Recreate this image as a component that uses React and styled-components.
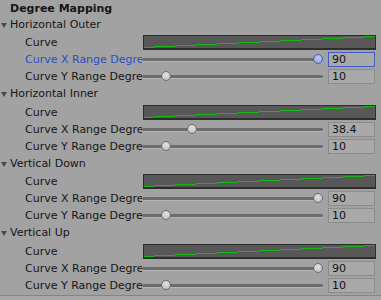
import styled, { createGlobalStyle } from "styled-components";

const GlobalStyle = createGlobalStyle`
  body {
    margin: 0;
    background: #a2a2a2;
    font-family: "DejaVu Sans", "Liberation Sans", sans-serif;
    font-size: 11px;
    color: #161616;
  }
`;

const Panel = styled.div`
  width: 381px;
  height: 300px;
  overflow: hidden;
  background: #a2a2a2;
`;

const Title = styled.div`
  height: 17px;
  padding-left: 10px;
  box-sizing: border-box;
  padding-top: 1px;
  line-height: 16px;
  font-weight: bold;
`;

const Foldout = styled.div`
  display: flex;
  align-items: flex-start;
  height: ${(p) => p.$height}px;
  line-height: 16px;
`;

const Arrow = styled.span`
  width: 0;
  height: 0;
  margin: 6px 3px 0 1px;
  border-left: 3px solid transparent;
  border-right: 3px solid transparent;
  border-top: 5px solid #4a4a4a;
`;

const Row = styled.div`
  display: flex;
  align-items: flex-start;
  height: 17px;
`;

const Label = styled.span`
  width: 117px;
  margin-left: 25px;
  line-height: 15px;
  white-space: nowrap;
  overflow: hidden;
  color: ${(p) => (p.$focused ? "#2b4cc9" : "#161616")};
`;

const CurveBox = styled.div`
  width: 233px;
  height: 15px;
  margin-left: 1px;
  box-sizing: border-box;
  background: #585858;
  border: 1px solid #2e2e2e;
  border-bottom-width: 2px;
  svg {
    display: block;
  }
`;

const SliderArea = styled.div`
  position: relative;
  width: 181px;
  height: 15px;
`;

const Track = styled.div`
  position: absolute;
  left: 0;
  right: 0;
  top: 6px;
  height: 3px;
  border-radius: 2px;
  background: #6c6c6c;
  box-shadow: 0 1px 0 #b4b4b4;
`;

const Thumb = styled.div`
  position: absolute;
  top: 2px;
  width: 10px;
  height: 10px;
  margin-left: -5px;
  box-sizing: border-box;
  border-radius: 50%;
  border: 1px solid ${(p) => (p.$focused ? "#4660bd" : "#6e6e6e")};
  background: ${(p) =>
    p.$focused
      ? "radial-gradient(circle at 50% 35%, #c4cbe6, #8d9bd0)"
      : "radial-gradient(circle at 50% 35%, #e4e4e4, #b6b6b6)"};
`;

const NumberField = styled.div`
  width: 47px;
  height: 15px;
  margin-left: 5px;
  box-sizing: border-box;
  padding-left: 3px;
  line-height: 13px;
  background: #a9a9a9;
  border: 1px solid ${(p) => (p.$focused ? "#3f5fc6" : "#8b8b8b")};
  color: #111;
`;

const Footer = styled.div`
  height: 5px;
  border-top: 1px solid #858585;
  background: #a6a6a6;
`;

function Curve() {
  return (
    <CurveRow>
      <Label>Curve</Label>
      <CurveBox>
        <svg width="231" height="12" shapeRendering="crispEdges">
          <line x1="0" y1="11.5" x2="231" y2="0.5" stroke="#17b817" strokeWidth="1" />
        </svg>
      </CurveBox>
    </CurveRow>
  );
}

const CurveRow = styled(Row)``;

function Slider({ label, value, min, max, focused }) {
  const center = 5 + ((value - min) / (max - min)) * 171;
  return (
    <Row>
      <Label $focused={focused}>{label}</Label>
      <SliderArea>
        <Track />
        <Thumb $focused={focused} style={{ left: center }} />
      </SliderArea>
      <NumberField $focused={focused}>{value}</NumberField>
    </Row>
  );
}

const groups = [
  { name: "Horizontal Outer", x: 90, y: 10, focused: true, height: 18 },
  { name: "Horizontal Inner", x: 38.4, y: 10, height: 19 },
  { name: "Vertical Down", x: 90, y: 10, height: 18 },
  { name: "Vertical Up", x: 90, y: 10, height: 19 },
];

export default function App() {
  return (
    <Panel>
      <GlobalStyle />
      <Title>Degree Mapping</Title>
      {groups.map((g) => (
        <div key={g.name}>
          <Foldout $height={g.height}>
            <Arrow />
            {g.name}
          </Foldout>
          <Curve />
          <Slider label="Curve X Range Degree" value={g.x} min={20} max={90} focused={g.focused} />
          <Slider label="Curve Y Range Degree" value={g.y} min={0} max={90} />
        </div>
      ))}
      <Footer />
    </Panel>
  );
}
